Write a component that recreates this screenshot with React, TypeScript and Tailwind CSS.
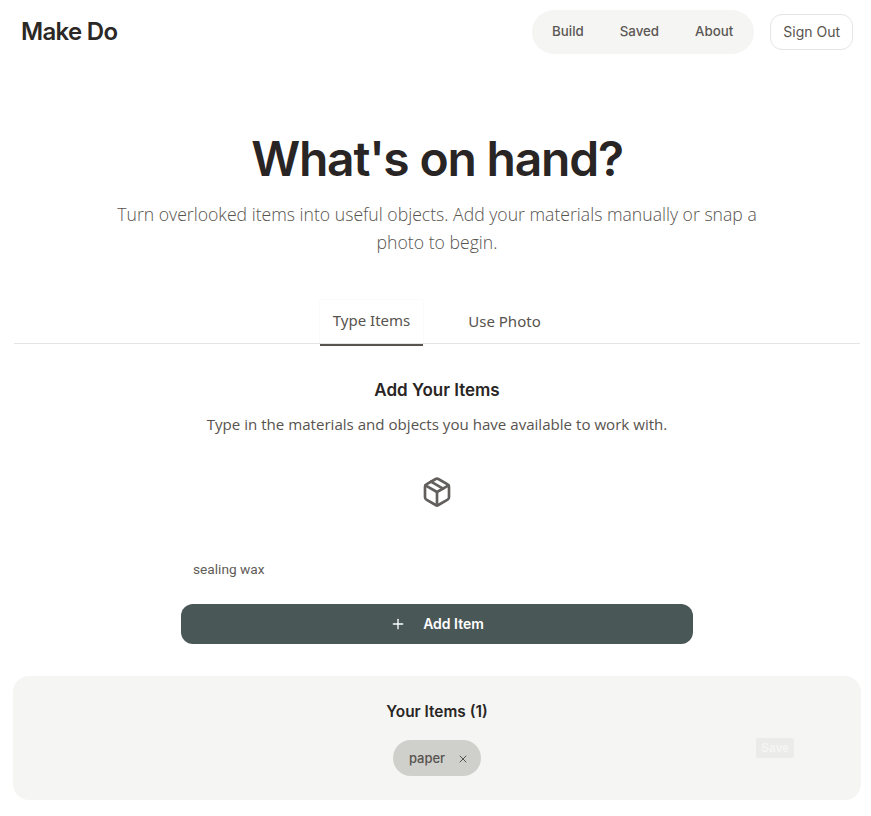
import { Package, Plus, X } from "lucide-react";

export default function App() {
  return (
    <div className="min-h-[816px] bg-white font-['Inter',sans-serif] text-[#292524]">
      <header className="flex h-[64px] items-center justify-between pl-[21px] pr-[18px]">
        <span className="text-2xl font-semibold tracking-[-0.7px] text-[#2b2826]">Make Do</span>
        <div className="flex items-center gap-4">
          <nav className="flex h-[44px] items-center gap-9 rounded-full bg-[#f5f5f3] pl-5 pr-[21px] text-[13.3px] font-medium text-[#5c5855]">
            <span>Build</span>
            <span>Saved</span>
            <span>About</span>
          </nav>
          <button className="h-9 rounded-xl border border-[#e7e5e4] px-3 text-sm font-normal text-[#57534e]">Sign Out</button>
        </div>
      </header>

      <main className="pl-[13px] pr-[10px]">
        <section className="flex flex-col items-center pt-[65px]">
          <h1 className="text-[48px] leading-[60px] font-semibold tracking-[-1.2px]">What's on hand?</h1>
          <p className="mt-[11px] w-[672px] text-center font-['Open_Sans',sans-serif] text-[17.64px] leading-[28px] font-light text-[#57534e]">
            Turn overlooked items into useful objects. Add your materials manually or snap a photo to begin.
          </p>
        </section>

        <div className="mx-px mt-[44px] flex h-[44px] justify-center gap-[32px] border-b border-[#e7e5e4] font-['Noto_Sans',sans-serif] text-[15px] font-normal text-[#57534e]">
          <div className="-mb-[2px] h-[46px] w-[103px] border-b-2 border-[#57534e] pt-[9px] text-center shadow-[0_0_2px_rgba(0,0,0,0.05)]">Type Items</div>
          <div className="w-[99px] pt-[10px] text-center">Use Photo</div>
        </div>

        <section className="flex flex-col items-center">
          <h2 className="mt-[33px] text-[17px] leading-[26px] font-semibold">Add Your Items</h2>
          <p className="mt-[11px] font-['Open_Sans',sans-serif] text-[15.1px] leading-5 text-[#57534e]">
            Type in the materials and objects you have available to work with.
          </p>
          <Package className="mt-[42px] text-[#625f5c]" size={32} strokeWidth={2} />
          <div className="mt-[46px] h-[40px] w-[512px] px-3 pt-[5px] font-['Roboto',sans-serif] text-[13.7px] leading-5 text-[#5f5b57]">sealing wax</div>
          <button className="mt-[10px] flex h-[40px] w-[512px] items-center justify-center gap-[17px] rounded-xl bg-[#4a5757] text-sm font-semibold text-white">
            <Plus size={16} />
            Add Item
          </button>
        </section>

        <section className="relative mt-[32px] flex h-[124px] flex-col items-center rounded-2xl bg-[#f5f5f3] pt-[24px]">
          <h3 className="text-[15.4px] leading-[24px] font-semibold">Your Items (1)</h3>
          <div className="mt-[16px] flex h-[36px] items-center gap-[12px] rounded-full bg-[#cfcfcb] pr-3 pl-4 pt-px text-[13px] font-medium text-[#57534e]">
            paper
            <X size={12} />
          </div>
          <button className="absolute top-[62px] left-[743px] h-[20px] w-[38px] rounded-[2px] bg-[#ebebe9] font-['Liberation_Sans',sans-serif] text-xs font-bold text-[#f5f5f3]">Save</button>
        </section>
      </main>
    </div>
  );
}
